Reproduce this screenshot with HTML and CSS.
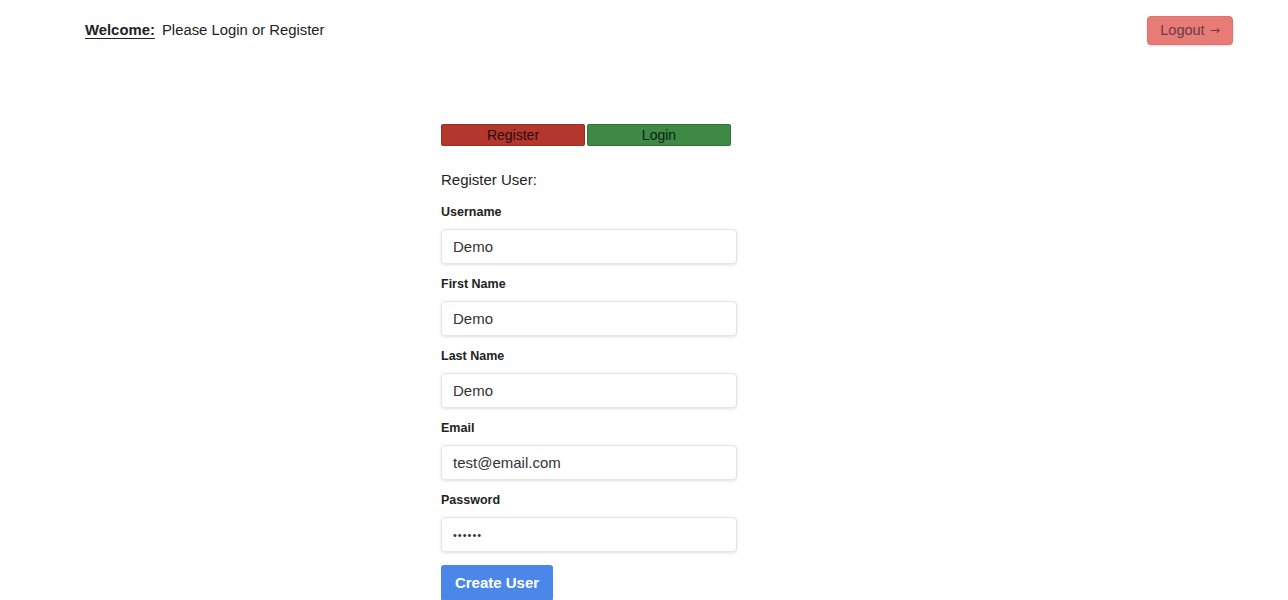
FILE: index.html
```html
<!DOCTYPE html>
<html>
<head>
<meta charset="utf-8">
<link rel="stylesheet" href="styles.css">
</head>
<body>
<header class="topbar">
  <div class="welcome"><span class="welcome-label">Welcome:</span> <span class="welcome-text">Please Login or Register</span></div>
  <button class="logout">Logout<span class="arrow">&rarr;</span></button>
</header>
<main class="panel">
  <div class="tabs">
    <button class="tab tab-register">Register</button>
    <button class="tab tab-login">Login</button>
  </div>
  <div class="form-title">Register User:</div>
  <form class="form">
    <label class="field-label">Username</label>
    <input class="field-input" type="text" value="Demo">
    <label class="field-label">First Name</label>
    <input class="field-input" type="text" value="Demo">
    <label class="field-label">Last Name</label>
    <input class="field-input" type="text" value="Demo">
    <label class="field-label">Email</label>
    <input class="field-input" type="text" value="test@email.com">
    <label class="field-label">Password</label>
    <input class="field-input field-password" type="password" value="demo12">
    <button type="button" class="submit">Create User</button>
  </form>
</main>
</body>
</html>
```
FILE: styles.css
```css
* { box-sizing: border-box; }
html, body { margin: 0; padding: 0; background: #ffffff; }
body {
  font-family: "Liberation Sans", Arial, sans-serif;
  color: #222;
  width: 1288px;
  height: 600px;
  overflow: hidden;
}
.topbar {
  display: flex;
  justify-content: space-between;
  align-items: flex-start;
  padding: 16px 55px 0 85px;
  height: 124px;
}
.welcome {
  font-size: 14.85px;
  line-height: 20px;
  margin-top: 4px;
  color: #222;
}
.welcome-label {
  font-weight: bold;
  text-decoration: underline;
  text-underline-offset: 3px;
  margin-right: 3px;
}
.logout {
  width: 86px;
  height: 29px;
  background: #e77b76;
  border: 1px solid #e16f6a;
  border-radius: 4px;
  color: #6b3a46;
  font-family: "Liberation Sans", Arial, sans-serif;
  font-size: 14.5px;
  line-height: 27px;
  padding: 0;
  box-shadow: 0 1px 2px rgba(0,0,0,0.15);
}
.logout .arrow {
  font-family: "DejaVu Sans", sans-serif;
  font-size: 12px;
  margin-left: 5px;
  vertical-align: 1px;
}
.panel {
  width: 296px;
  margin-left: 441px;
}
.tabs {
  display: flex;
  gap: 2px;
  width: 290px;
}
.tab {
  flex: 1;
  height: 22px;
  border: 1px solid rgba(0,0,0,0.15);
  border-radius: 2px;
  font-family: "Liberation Sans", Arial, sans-serif;
  font-size: 14px;
  line-height: 18px;
  color: #1d1d1d;
  padding: 0 0 1px;
}
.tab-register { background: #b4372d; color: #2a0d0b; }
.tab-login { background: #3d8945; color: #0d230f; }
.form-title {
  font-size: 15px;
  margin-top: 25px;
  line-height: 18px;
  color: #222;
}
.form {
  display: flex;
  flex-direction: column;
  align-items: flex-start;
}
.field-label {
  font-size: 12.5px;
  font-weight: bold;
  color: #222;
  line-height: 16px;
  margin-top: 12px;
  margin-bottom: 9px;
}
.form .field-label:first-child { margin-top: 15px; }
.field-input {
  width: 296px;
  height: 35px;
  border: 1px solid #e4e4e4;
  border-radius: 4px;
  padding: 0 11px;
  font-family: "Liberation Sans", Arial, sans-serif;
  font-size: 15px;
  color: #333;
  box-shadow: 0 1px 3px rgba(0,0,0,0.12);
  background: #fff;
  outline: none;
}
.field-password {
  font-size: 11px;
  letter-spacing: 1px;
}
.submit {
  margin-top: 13px;
  width: 112px;
  height: 36px;
  background: #4a87e9;
  border: none;
  border-radius: 3px;
  color: #fff;
  font-family: "Liberation Sans", Arial, sans-serif;
  font-weight: bold;
  font-size: 15px;
  padding: 0 0 2px;
}
```
